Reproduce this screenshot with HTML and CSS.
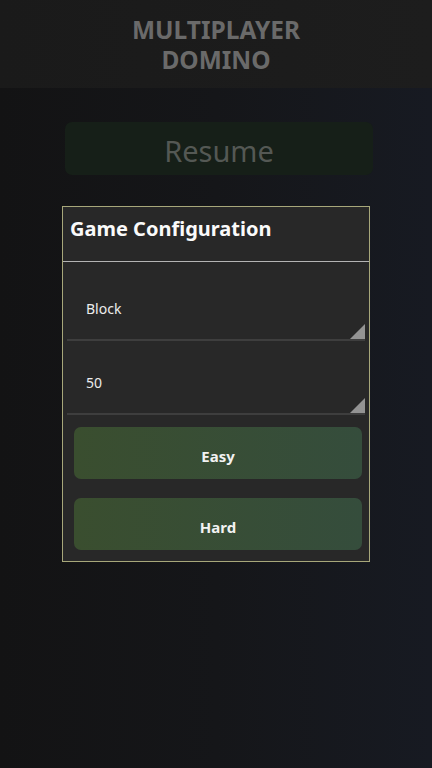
FILE: index.html
```html
<!DOCTYPE html>
<html lang="en">
  <head>
    <meta charset="UTF-8" />
    <title>Multiplayer Domino</title>
    <link rel="stylesheet" href="styles.css">
  </head>
  <body>
    <header class="top-bar">
      <h1>
        <span class="title-line">MULTIPLAYER</span>
        <span class="title-line">DOMINO</span>
      </h1>
    </header>

    <main class="content">
      <button type="button" class="resume">Resume</button>

      <section class="config">
        <h2>Game Configuration</h2>

        <div class="spinners">
          <div class="spinner">
            <span class="spinner-value">Block</span>
            <span class="spinner-arrow"></span>
          </div>
          <div class="spinner">
            <span class="spinner-value">50</span>
            <span class="spinner-arrow"></span>
          </div>
        </div>

        <div class="levels">
          <button type="button" class="level">Easy</button>
          <button type="button" class="level">Hard</button>
        </div>
      </section>
    </main>
  </body>
</html>
```

FILE: styles.css
```css
:root {
  --bg-left: #131314;
  --bg-right: #171a22;
  --panel-color: #282828;
  --panel-border: #a7a77a;
  --text-color: #f0f0f0;
  --muted-text: #6a6a6a;
}

* {
  box-sizing: border-box;
}

body {
  margin: 0;
  height: 768px;
  font-family: "Noto Sans", "Open Sans", sans-serif;
  color: var(--text-color);
  background: linear-gradient(to right, var(--bg-left) 0%, #151619 50%, var(--bg-right) 100%);
}

.top-bar {
  height: 88px;
  background: linear-gradient(to right, #1a1a1a, #1d1d1d);
  display: flex;
  align-items: center;
  justify-content: center;
}

.top-bar h1 {
  margin: 0;
  padding-top: 2px;
  font-size: 24.5px;
  font-weight: bold;
  text-align: center;
  color: var(--muted-text);
}

.title-line {
  display: block;
  height: 30px;
  line-height: 30px;
}

.content {
  padding-top: 34px;
}

button {
  font-family: inherit;
  border: none;
  cursor: pointer;
}

.resume {
  display: block;
  margin-left: 65px;
  width: 308px;
  height: 53px;
  border-radius: 7px;
  background-color: #161f18;
  color: #545854;
  font-size: 29px;
  padding: 3px 0 0;
}

.config {
  margin: 31px 0 0 62px;
  width: 308px;
  height: 356px;
  border: 1px solid var(--panel-border);
  background-color: var(--panel-color);
}

.config h2 {
  margin: 0;
  height: 55px;
  padding: 8px 0 0 7px;
  font-size: 20px;
  font-weight: bold;
  border-bottom: 1px solid #b4b4b4;
  color: #fafafa;
}

.spinners {
  padding: 5px 4px 0;
}

.spinner {
  display: flex;
  justify-content: space-between;
  height: 74px;
  border-bottom: 2px solid #3e3e3e;
  padding-left: 19px;
}

.spinner-value {
  align-self: center;
  padding-top: 10px;
  font-size: 14px;
  color: #ececec;
}

.spinner-arrow {
  align-self: flex-end;
  width: 15px;
  height: 15px;
  background-color: #939393;
  clip-path: polygon(100% 0, 100% 100%, 0 100%);
}

.levels {
  display: flex;
  flex-direction: column;
  gap: 19px;
  padding: 12px 0 0 11px;
}

.level {
  width: 288px;
  height: 52px;
  border-radius: 7px;
  background: linear-gradient(to right, #3a4e2f, #354d3c);
  color: #f2f2f2;
  font-size: 15px;
  font-weight: bold;
  padding: 5px 0 0;
}
```
